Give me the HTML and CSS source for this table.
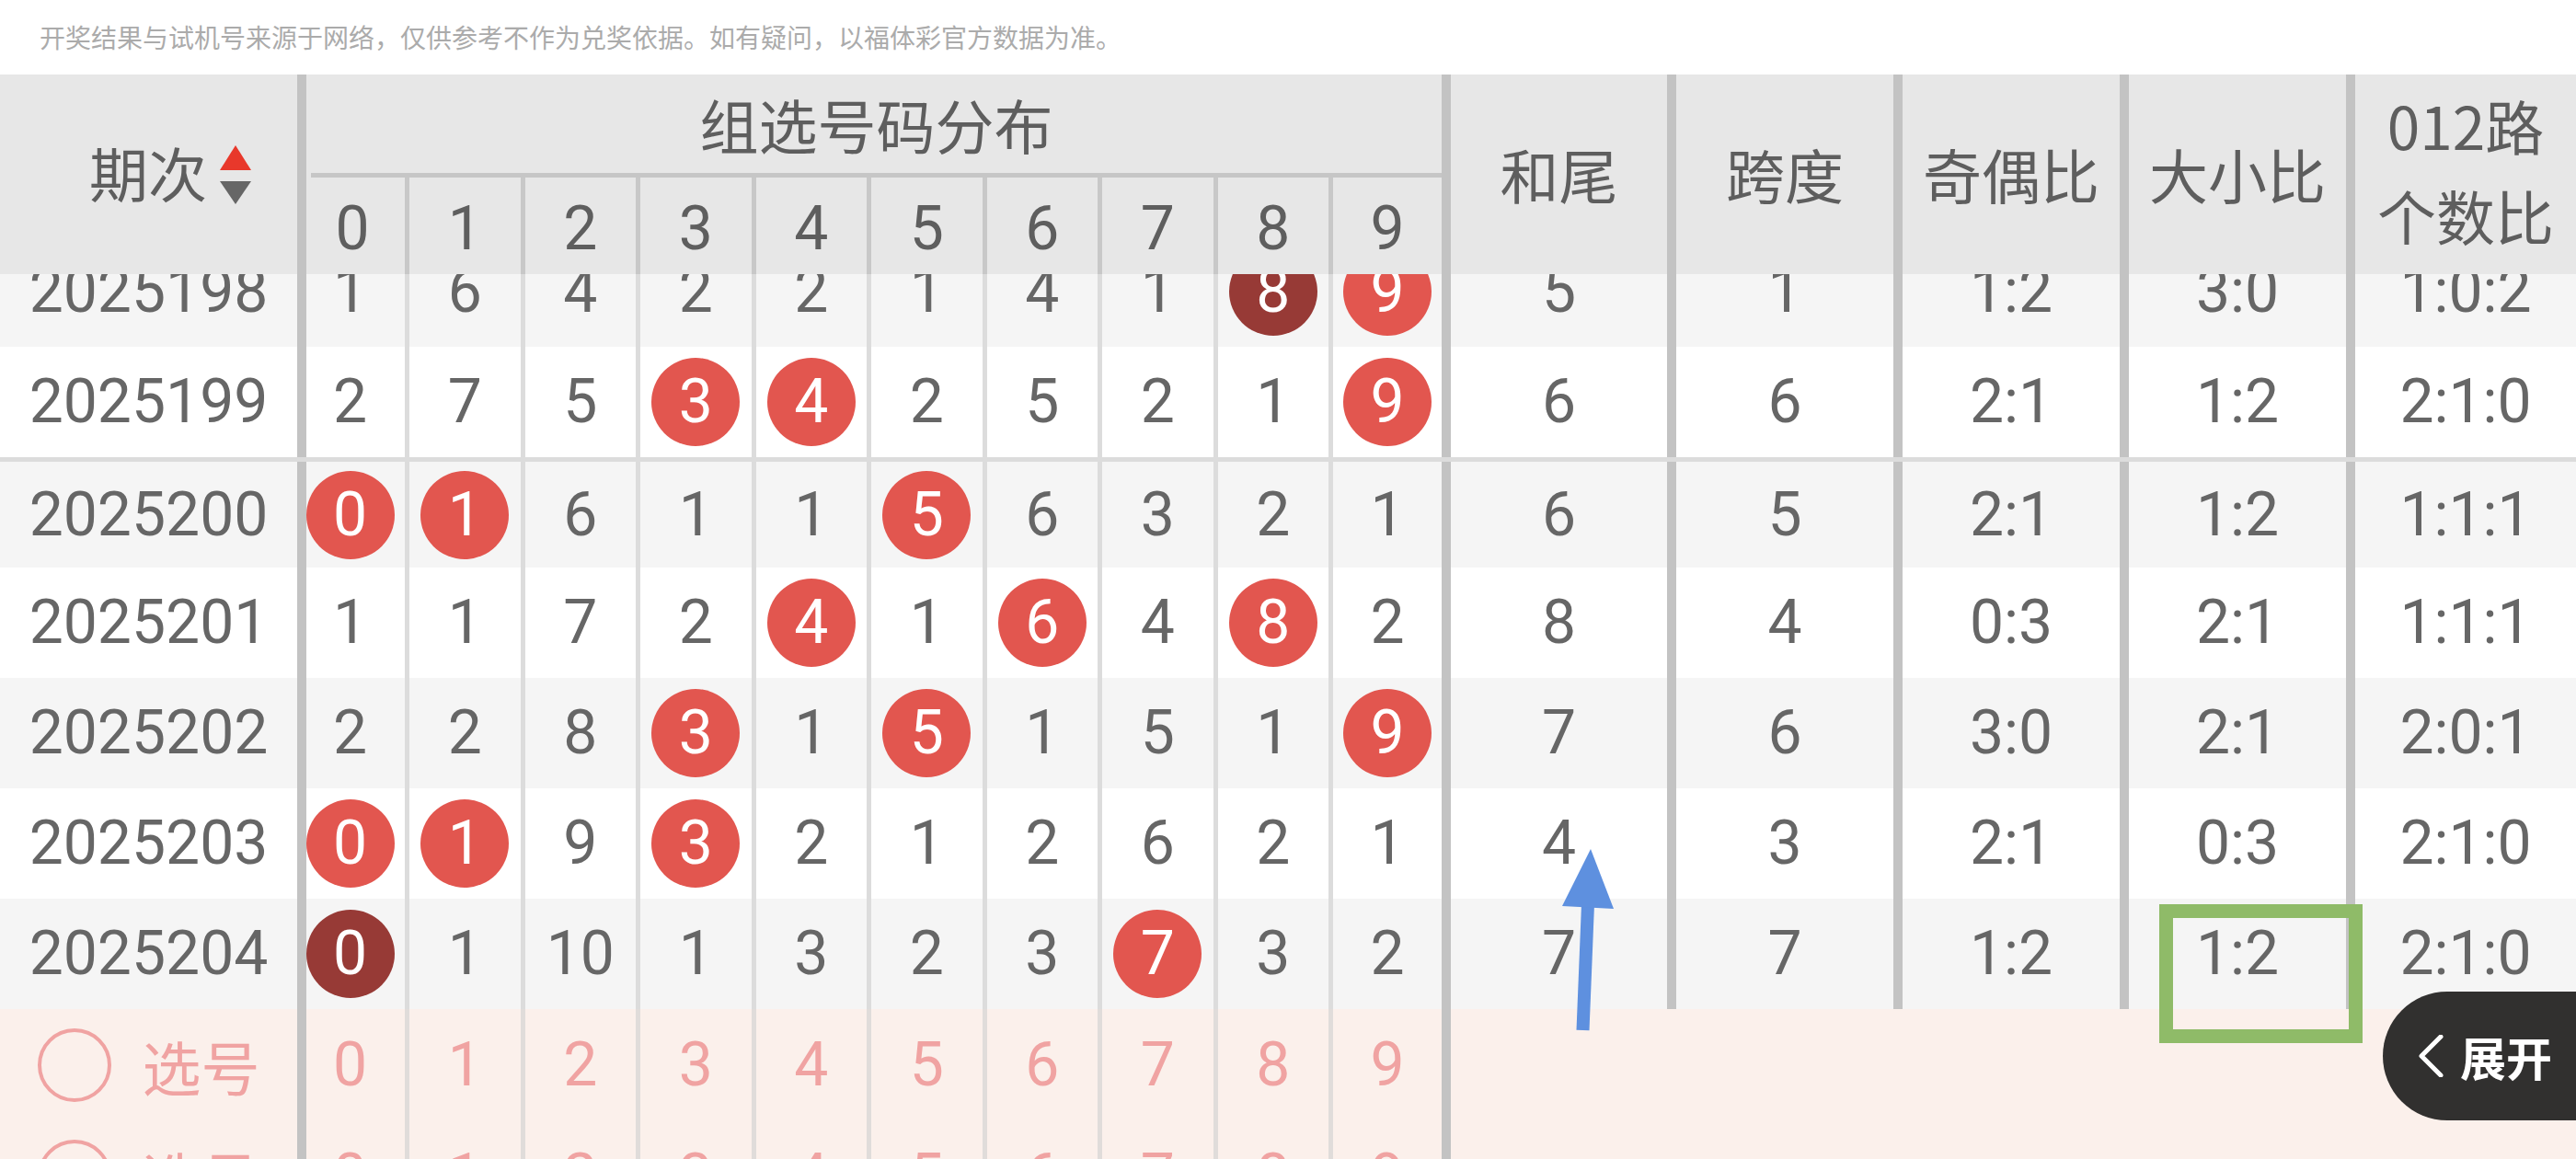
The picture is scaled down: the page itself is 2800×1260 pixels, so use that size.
FILE: index.html
```html
<!DOCTYPE html>
<html lang="zh-CN">
<head>
<meta charset="utf-8">
<title>组选号码分布</title>
<link rel="stylesheet" href="styles.css">
</head>
<body>
<div class="page">
  <p class="notice">开奖结果与试机号来源于网络，仅供参考不作为兑奖依据。如有疑问，以福体彩官方数据为准。</p>

  <div class="thead">
    <div class="th th-issue">
      <span>期次</span>
      <svg class="sort" width="34" height="64" viewBox="0 0 34 64"><polygon points="17,0 34,27 0,27" fill="#e8382b"/><polygon points="0,39 34,39 17,64" fill="#666"/></svg>
    </div>
    <div class="th-group">
      <div class="group-title">组选号码分布</div>
      <div class="group-digits">
        <div class="hd c0">0</div><div class="hd">1</div><div class="hd">2</div><div class="hd">3</div><div class="hd">4</div><div class="hd">5</div><div class="hd">6</div><div class="hd">7</div><div class="hd">8</div><div class="hd last">9</div>
      </div>
    </div>
    <div class="th th-stat w245">和尾</div>
    <div class="th th-stat w246">跨度</div>
    <div class="th th-stat w246">奇偶比</div>
    <div class="th th-stat w246">大小比</div>
    <div class="th th-stat w250 two">012路<br>个数比</div>
  </div>

  <div class="rows-window">
    <div class="rows">
      <div class="tr alt">
        <div class="td issue">2025198</div>
        <div class="td d c0">1</div><div class="td d">6</div><div class="td d">4</div><div class="td d">2</div><div class="td d">2</div><div class="td d">1</div><div class="td d">4</div><div class="td d">1</div><div class="td d"><span class="ball dark">8</span></div><div class="td d last"><span class="ball">9</span></div>
        <div class="td s">5</div><div class="td s">1</div><div class="td s">1:2</div><div class="td s">3:0</div><div class="td s">1:0:2</div>
      </div>
      <div class="tr">
        <div class="td issue">2025199</div>
        <div class="td d c0">2</div><div class="td d">7</div><div class="td d">5</div><div class="td d"><span class="ball">3</span></div><div class="td d"><span class="ball">4</span></div><div class="td d">2</div><div class="td d">5</div><div class="td d">2</div><div class="td d">1</div><div class="td d last"><span class="ball">9</span></div>
        <div class="td s">6</div><div class="td s">6</div><div class="td s">2:1</div><div class="td s">1:2</div><div class="td s">2:1:0</div>
      </div>
      <div class="tr alt group-start">
        <div class="td issue">2025200</div>
        <div class="td d c0"><span class="ball">0</span></div><div class="td d"><span class="ball">1</span></div><div class="td d">6</div><div class="td d">1</div><div class="td d">1</div><div class="td d"><span class="ball">5</span></div><div class="td d">6</div><div class="td d">3</div><div class="td d">2</div><div class="td d last">1</div>
        <div class="td s">6</div><div class="td s">5</div><div class="td s">2:1</div><div class="td s">1:2</div><div class="td s">1:1:1</div>
      </div>
      <div class="tr">
        <div class="td issue">2025201</div>
        <div class="td d c0">1</div><div class="td d">1</div><div class="td d">7</div><div class="td d">2</div><div class="td d"><span class="ball">4</span></div><div class="td d">1</div><div class="td d"><span class="ball">6</span></div><div class="td d">4</div><div class="td d"><span class="ball">8</span></div><div class="td d last">2</div>
        <div class="td s">8</div><div class="td s">4</div><div class="td s">0:3</div><div class="td s">2:1</div><div class="td s">1:1:1</div>
      </div>
      <div class="tr alt">
        <div class="td issue">2025202</div>
        <div class="td d c0">2</div><div class="td d">2</div><div class="td d">8</div><div class="td d"><span class="ball">3</span></div><div class="td d">1</div><div class="td d"><span class="ball">5</span></div><div class="td d">1</div><div class="td d">5</div><div class="td d">1</div><div class="td d last"><span class="ball">9</span></div>
        <div class="td s">7</div><div class="td s">6</div><div class="td s">3:0</div><div class="td s">2:1</div><div class="td s">2:0:1</div>
      </div>
      <div class="tr">
        <div class="td issue">2025203</div>
        <div class="td d c0"><span class="ball">0</span></div><div class="td d"><span class="ball">1</span></div><div class="td d">9</div><div class="td d"><span class="ball">3</span></div><div class="td d">2</div><div class="td d">1</div><div class="td d">2</div><div class="td d">6</div><div class="td d">2</div><div class="td d last">1</div>
        <div class="td s">4</div><div class="td s">3</div><div class="td s">2:1</div><div class="td s">0:3</div><div class="td s">2:1:0</div>
      </div>
      <div class="tr alt">
        <div class="td issue">2025204</div>
        <div class="td d c0"><span class="ball dark">0</span></div><div class="td d">1</div><div class="td d">10</div><div class="td d">1</div><div class="td d">3</div><div class="td d">2</div><div class="td d">3</div><div class="td d"><span class="ball">7</span></div><div class="td d">3</div><div class="td d last">2</div>
        <div class="td s">7</div><div class="td s">7</div><div class="td s">1:2</div><div class="td s">1:2</div><div class="td s">2:1:0</div>
      </div>
    </div>
  </div>

  <div class="pick">
    <div class="pr">
      <div class="pc issue"><span class="ring"></span><span>选号</span></div>
      <div class="pc d c0">0</div><div class="pc d">1</div><div class="pc d">2</div><div class="pc d">3</div><div class="pc d">4</div><div class="pc d">5</div><div class="pc d">6</div><div class="pc d">7</div><div class="pc d">8</div><div class="pc d last">9</div>
      <div class="pc rest"></div>
    </div>
    <div class="pr">
      <div class="pc issue"><span class="ring"></span><span>选号</span></div>
      <div class="pc d c0">0</div><div class="pc d">1</div><div class="pc d">2</div><div class="pc d">3</div><div class="pc d">4</div><div class="pc d">5</div><div class="pc d">6</div><div class="pc d">7</div><div class="pc d">8</div><div class="pc d last">9</div>
      <div class="pc rest"></div>
    </div>
  </div>

  <svg class="arrow" width="75" height="215" viewBox="0 0 75 215">
    <line x1="30.5" y1="205" x2="36" y2="68" stroke="#5e90df" stroke-width="14"/>
    <polygon points="39,8 64,73 8,70" fill="#5e90df"/>
  </svg>
  <div class="mark"></div>
  <div class="expand">
    <svg width="28" height="46" viewBox="0 0 28 46"><polyline points="25,2 4,23 25,44" fill="none" stroke="#fff" stroke-width="5" stroke-linecap="round" stroke-linejoin="round"/></svg>
    <span>展开</span>
  </div>
</div>
</body>
</html>
```

FILE: styles.css
```css
html, body {
  margin: 0;
  padding: 0;
  background: #fff;
}
body {
  width: 2800px;
  height: 1260px;
  overflow: hidden;
  font-family: Roboto, "Noto Sans CJK SC", sans-serif;
}
.page {
  position: relative;
  width: 2800px;
  height: 1260px;
  overflow: hidden;
}
.notice {
  margin: 0;
  height: 81px;
  line-height: 81px;
  padding-left: 43px;
  font-family: "Noto Sans CJK SC", sans-serif;
  font-size: 28px;
  color: #ababab;
  white-space: nowrap;
}

/* header */
.thead {
  display: flex;
  height: 217px;
  background: #e7e7e7;
  color: #5e5e5e;
}
.th {
  box-sizing: border-box;
  display: flex;
  align-items: center;
  justify-content: center;
  font-family: "Noto Sans CJK SC", sans-serif;
  font-size: 64px;
}
.th-issue {
  width: 333px;
  border-right: 10px solid #c3c3c3;
  padding-left: 47px;
  padding-bottom: 8px;
  gap: 14px;
}
.sort { display: block; margin-top: 8px; }
.th-group {
  width: 1234px;
  display: flex;
  flex-direction: column;
}
.group-title {
  box-sizing: border-box;
  height: 112px;
  margin-left: 5px;
  border-bottom: 5px solid #c6c6c6;
  display: flex;
  align-items: center;
  justify-content: center;
  font-family: "Noto Sans CJK SC", sans-serif;
  font-size: 64px;
  padding-bottom: 2px;
}
.group-digits {
  height: 105px;
  display: grid;
  grid-template-columns: 112px repeat(8, 125.5px) 118px;
}
.hd {
  box-sizing: border-box;
  display: flex;
  align-items: center;
  justify-content: center;
  border-right: 5px solid #c8c8c8;
  font-family: Roboto, sans-serif;
  font-size: 66px;
  line-height: 1;
  padding-top: 6px;
}
.hd.c0 { padding-right: 7px; }
.hd.last { border-right: none; }
.th-stat {
  border-left: 10px solid #c3c3c3;
  padding-bottom: 4px;
}
.w245 { width: 245px; }
.w246 { width: 246px; }
.w250 { width: 250px; }
.th-stat.two {
  text-align: center;
  line-height: 98px;
  padding-bottom: 12px;
}

/* body rows */
.rows-window {
  overflow: hidden;
}
.rows {
  margin-top: -41px;
}
.tr {
  box-sizing: border-box;
  height: 120px;
  display: grid;
  grid-template-columns: 333px 112px repeat(8, 125.5px) 118px 245px 246px 246px 246px 250px;
  background: #fff;
  color: #666;
  font-size: 66px;
  line-height: 1;
}
.tr.alt { background: #f5f5f5; }
.tr.group-start {
  box-shadow: inset 0 5px 0 #dcdcdc;
  padding-top: 5px;
}
.td {
  box-sizing: border-box;
  display: flex;
  align-items: center;
  justify-content: center;
}
.td.issue {
  border-right: 10px solid #c3c3c3;
}
.td.d {
  border-right: 5px solid #dcdcdc;
}
.td.d.c0 { padding-right: 12px; }
.td.d.last { border-right: none; }
.td.s {
  border-left: 10px solid #c3c3c3;
}
.ball {
  flex: none;
  width: 96px;
  height: 96px;
  border-radius: 50%;
  background: #e2564f;
  color: #fff;
  display: flex;
  align-items: center;
  justify-content: center;
}
.ball.dark { background: #973a36; }

/* pick area */
.pick {
  background: #fbf0eb;
  height: 300px;
}
.pr {
  height: 121px;
  display: grid;
  grid-template-columns: 333px 112px repeat(8, 125.5px) 118px 1233px;
  color: #f0a3a2;
  font-size: 66px;
  line-height: 1;
}
.pc {
  box-sizing: border-box;
  display: flex;
  align-items: center;
  justify-content: center;
}
.pc.issue {
  border-right: 10px solid #c3c3c3;
  gap: 34px;
  font-family: "Noto Sans CJK SC", sans-serif;
  font-size: 64px;
}
.ring {
  box-sizing: border-box;
  width: 80px;
  height: 80px;
  border: 4px solid #f0a3a2;
  border-radius: 50%;
}
.pc.d { border-right: 5px solid #e0dcda; }
.pc.d.c0 { padding-right: 12px; }
.pc.d.last { border-right: none; }
.pc.rest { border-left: 10px solid #c3c3c3; }

/* overlays */
.arrow {
  position: absolute;
  left: 1690px;
  top: 915px;
}
.mark {
  position: absolute;
  left: 2347px;
  top: 983px;
  width: 221px;
  height: 151px;
  box-sizing: border-box;
  border: 15px solid #8fbb68;
}
.expand {
  position: absolute;
  right: 0;
  top: 1078px;
  width: 210px;
  height: 140px;
  box-sizing: border-box;
  border-radius: 70px 0 0 70px;
  background: #31302f;
  display: flex;
  align-items: center;
  padding-left: 38px;
  gap: 18px;
  color: #fff;
  font-family: "Noto Sans CJK SC", sans-serif;
  font-weight: 700;
  font-size: 50px;
}
.expand svg { display: block; }
```
